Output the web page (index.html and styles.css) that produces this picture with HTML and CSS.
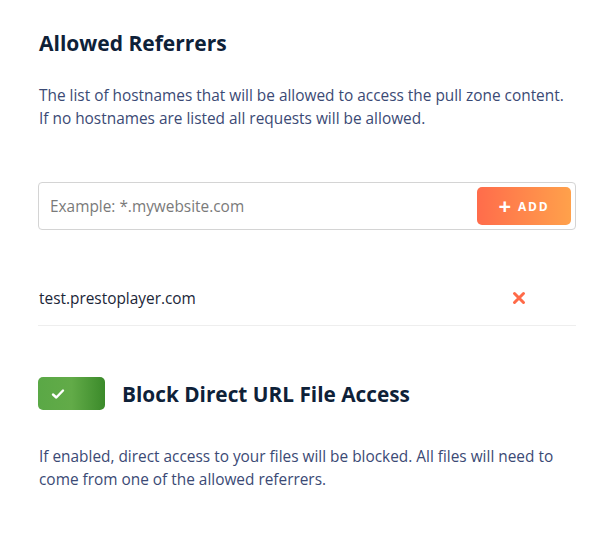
FILE: index.html
```html
<!DOCTYPE html>
<html>
<head>
<meta charset="utf-8">
<link rel="stylesheet" href="styles.css">
</head>
<body>
<div class="page">
  <h2 class="title">Allowed Referrers</h2>
  <p class="desc">The list of hostnames that will be allowed to access the pull zone content.<br>If no hostnames are listed all requests will be allowed.</p>
  <div class="input-box">
    <span class="placeholder">Example: *.mywebsite.com</span>
    <button class="add-btn"><span class="plus">+</span>ADD</button>
  </div>
  <div class="row">
    <span class="host">test.prestoplayer.com</span>
    <svg class="remove" width="14" height="14" viewBox="0 0 14 14"><path d="M2.5 2.5L11.5 11.5M11.5 2.5L2.5 11.5" stroke="#ff6a48" stroke-width="3" stroke-linecap="round"/></svg>
  </div>
  <div class="toggle-row">
    <div class="toggle">
      <svg width="14" height="12" viewBox="0 0 14 12"><path d="M2 6.5L5.3 9.5L12 2.5" fill="none" stroke="#fff" stroke-width="2.4" stroke-linecap="round" stroke-linejoin="round"/></svg>
    </div>
    <h3 class="toggle-title">Block Direct URL File Access</h3>
  </div>
  <p class="desc desc2">If enabled, direct access to your files will be blocked. All files will need to come from one of the allowed referrers.</p>
</div>
</body>
</html>
```
FILE: styles.css
```css
html, body {
  margin: 0;
  padding: 0;
  background: #ffffff;
}
body {
  font-family: "Open Sans", "Noto Sans", sans-serif;
}
.page {
  padding: 28px 24px 0 38px;
  width: 538px;
}
.title {
  margin: 0 0 0 1px;
  font-size: 21px;
  font-weight: 700;
  color: #0e2138;
  line-height: 31px;
}
.desc {
  margin: 25px 0 0 1px;
  font-size: 15.4px;
  line-height: 23px;
  color: #3b4a75;
}
.input-box {
  margin-top: 52px;
  height: 46px;
  border: 1px solid #d4d4d4;
  border-radius: 4px;
  display: flex;
  align-items: center;
  justify-content: space-between;
  padding: 0 4px 0 11px;
}
.placeholder {
  font-size: 15.4px;
  color: #7a7a7a;
}
.add-btn {
  height: 38px;
  width: 94px;
  border: none;
  border-radius: 5px;
  background: linear-gradient(90deg, #ff6c4b 0%, #ffa14b 100%);
  color: #fff;
  font-family: "Open Sans", "Noto Sans", sans-serif;
  font-weight: 700;
  font-size: 12px;
  letter-spacing: 1.8px;
  display: flex;
  align-items: center;
  justify-content: center;
  padding: 0;
}
.plus {
  font-size: 22px;
  font-weight: 700;
  margin-right: 5px;
  line-height: 1;
  position: relative;
  top: -1px;
}
.row {
  margin-top: 46px;
  height: 50px;
  border-bottom: 1px solid #eeeeee;
  display: flex;
  align-items: center;
  justify-content: space-between;
  padding: 0 50px 0 1px;
  box-sizing: border-box;
}
.host {
  font-size: 15.4px;
  color: #1b2638;
  position: relative;
  top: -2px;
}
.remove {
  position: relative;
  top: -3px;
}
.toggle-row {
  margin-top: 51px;
  display: flex;
  align-items: center;
}
.toggle {
  width: 67px;
  height: 33px;
  border-radius: 5px;
  background: linear-gradient(90deg, #5aa846 0%, #62ab48 50%, #3b8a2a 100%);
  display: flex;
  align-items: center;
  padding-left: 13px;
  box-sizing: border-box;
}
.toggle-title {
  margin: 0 0 0 17px;
  font-size: 20.8px;
  font-weight: 700;
  color: #0e2138;
  line-height: 32px;
}
.desc2 {
  margin-top: 35px;
}
```
